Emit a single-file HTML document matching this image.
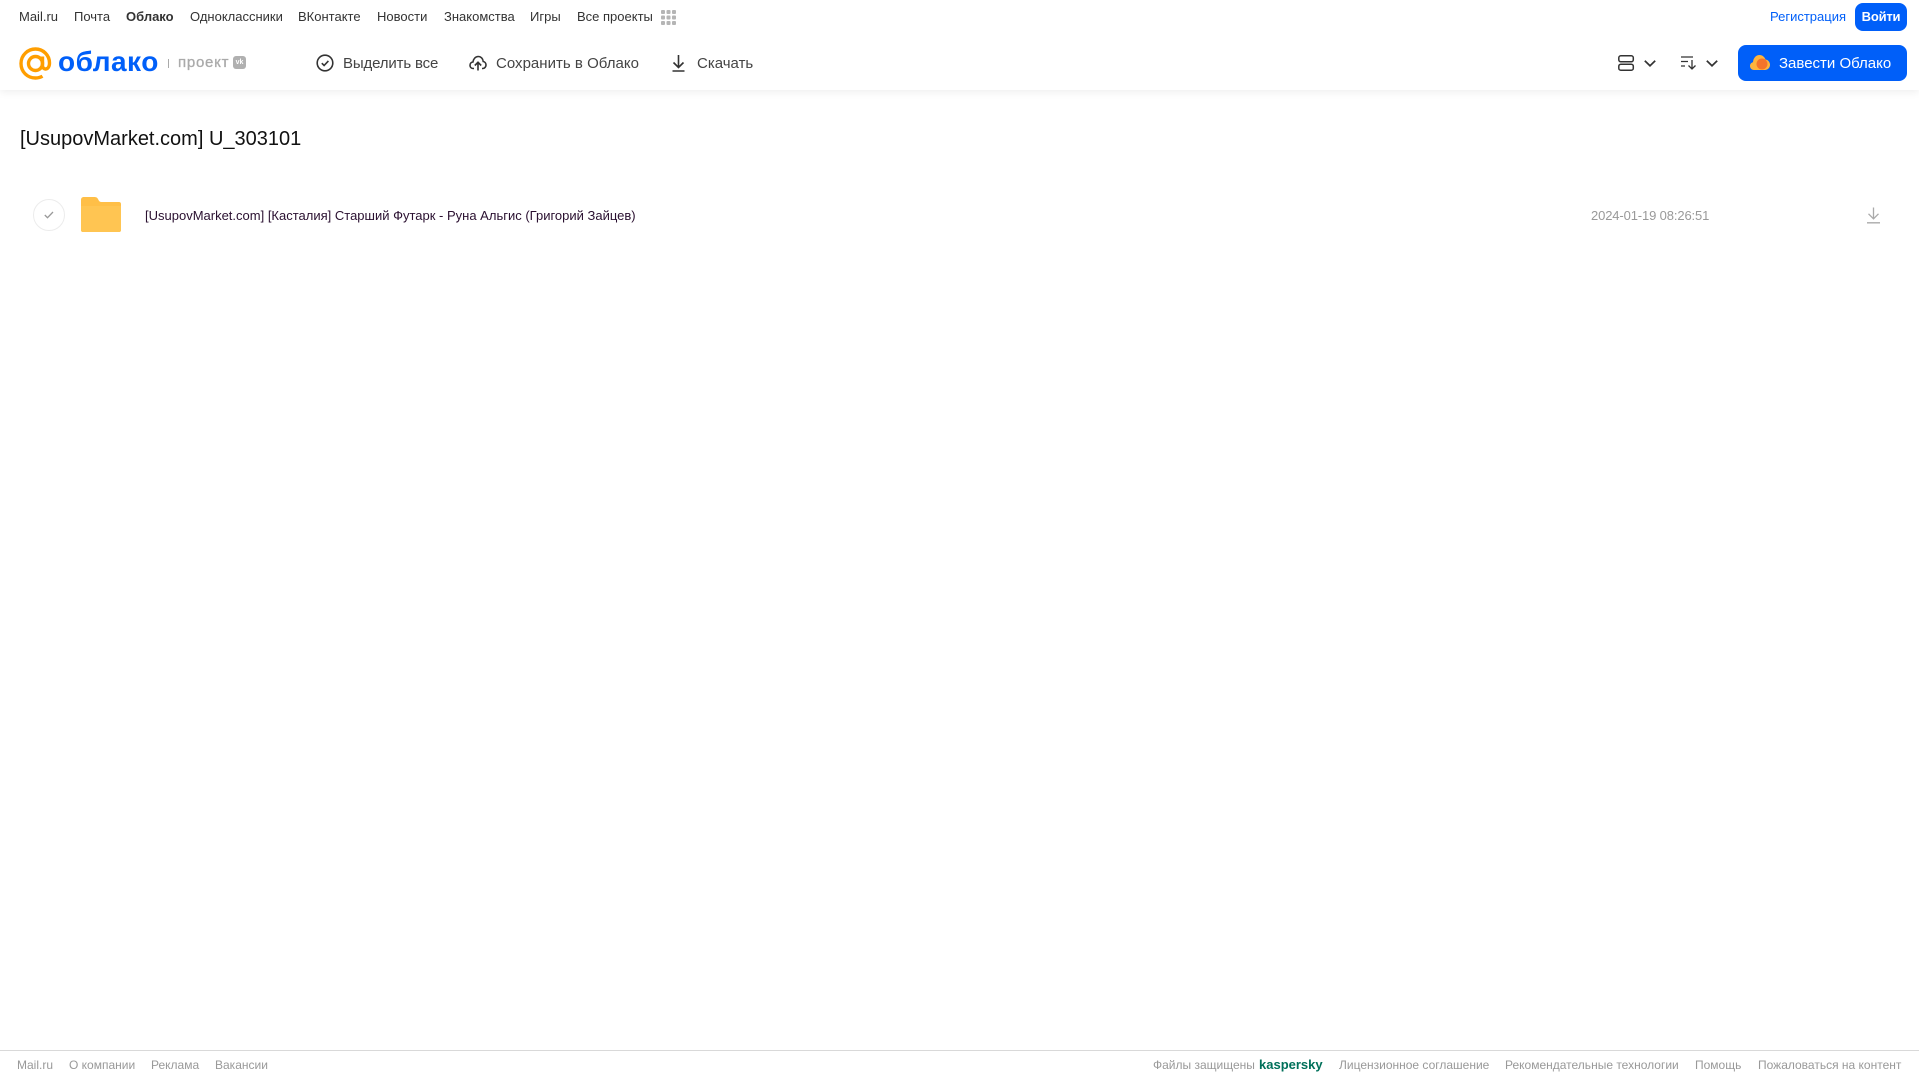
<!DOCTYPE html>
<html lang="ru"><head><meta charset="utf-8"><title>Облако</title>
<style>
html,body{margin:0;padding:0;width:1919px;height:1079px;overflow:hidden;background:#fff;font-family:"Liberation Sans",sans-serif}
.t{position:absolute;white-space:nowrap;line-height:20px}
.n{top:7px;font-size:13px;color:#333}
.b{top:54px;font-size:15px;color:#444;letter-spacing:0}
.f{top:1055px;font-size:12px;color:#999}
svg{position:absolute;overflow:visible}
</style></head><body>
<div style="position:absolute;left:0;top:0;width:1919px;height:90px;background:#fff;box-shadow:0 2px 8px rgba(0,0,0,.07)"></div>

<span class="t n" style="left:19px">Mail.ru</span>
<span class="t n" style="left:74px">Почта</span>
<span class="t n" style="left:126px;font-weight:bold">Облако</span>
<span class="t n" style="left:190px">Одноклассники</span>
<span class="t n" style="left:298px">ВКонтакте</span>
<span class="t n" style="left:377px">Новости</span>
<span class="t n" style="left:444px">Знакомства</span>
<span class="t n" style="left:530px">Игры</span>
<span class="t n" style="left:577px">Все проекты</span>
<svg style="left:661px;top:10px" width="15" height="15" fill="#b5b5b5"><rect width="4" height="4" rx="1"/><rect x="5.500" width="4" height="4" rx="1"/><rect x="11" width="4" height="4" rx="1"/><rect y="5.500" width="4" height="4" rx="1"/><rect x="5.500" y="5.500" width="4" height="4" rx="1"/><rect x="11" y="5.500" width="4" height="4" rx="1"/><rect y="11" width="4" height="4" rx="1"/><rect x="5.500" y="11" width="4" height="4" rx="1"/><rect x="11" y="11" width="4" height="4" rx="1"/></svg>

<span class="t n" style="left:1770px;color:#005ff9">Регистрация</span>
<div style="position:absolute;left:1855px;top:3px;width:52px;height:28px;border-radius:8px;background:#005ff9;color:#fff;font-size:13px;font-weight:bold;line-height:28px;text-align:center;letter-spacing:-.2px">Войти</div>

<svg style="left:19px;top:47px" width="33" height="33" viewBox="0 0 33 33" fill="none" stroke="#ff9e00" stroke-width="3.400"><circle cx="16.500" cy="16.500" r="7"/><path d="M23.500 9.500v9c0 5 7 5 7-2.500C30.500 8 24 2 16.500 2S2 8 2 16.500 8.500 31 16.500 31c3 0 5-.6 7-1.800"/></svg>
<span class="t" style="left:58px;top:47px;font-size:28px;line-height:30px;color:#005ff9;font-weight:bold;letter-spacing:.5px">облако</span>
<div style="position:absolute;left:168px;top:59px;width:1px;height:9px;background:#aaa"></div>
<span class="t" style="left:178px;top:53px;font-size:15px;color:#aaa;letter-spacing:.75px;-webkit-text-stroke:.3px #aaa">проект</span>
<div style="position:absolute;left:233px;top:56px;width:13px;height:13px;border-radius:3px;background:#b0b0b0;color:#fff;font-size:7px;font-weight:bold;line-height:13px;text-align:center">vk</div>

<svg style="left:316px;top:54px" width="18" height="18" viewBox="0 0 18 18" fill="none" stroke="#333" stroke-width="1.600"><circle cx="9" cy="9" r="7.800"/><path d="M5.800 9.200l2.300 2.300 4.300-4.600"/></svg>
<span class="t b" style="left:343px;letter-spacing:-.15px">Выделить все</span>
<svg style="left:469px;top:54px" width="18" height="18" viewBox="0 0 18 18" fill="none" stroke="#333" stroke-width="1.600"><path d="M5 14.500H4.300C2.300 14.500 1 13 1 11.200c0-1.700 1.200-3 2.900-3.200C4.300 5 6.500 2.500 9.200 2.500c2.800 0 4.800 2.200 5 5 1.700.3 2.800 1.800 2.800 3.500 0 1.900-1.400 3.500-3.300 3.500H13"/><path d="M9 16.500V8.500M5.800 11.500L9 8.300l3.200 3.200"/></svg>
<span class="t b" style="left:496px;letter-spacing:.02px">Сохранить в Облако</span>
<svg style="left:671px;top:54px" width="15" height="18" viewBox="0 0 15 18" fill="none" stroke="#333" stroke-width="1.600"><path d="M7.500 1v12M2.500 8.500l5 5 5-5M1.500 17h12"/></svg>
<span class="t b" style="left:697px">Скачать</span>

<svg style="left:1618px;top:55px" width="16" height="16" viewBox="0 0 16 16" fill="none" stroke="#333" stroke-width="1.500"><rect x=".8" y=".8" width="14.500" height="6" rx="2"/><rect x=".8" y="9.200" width="14.500" height="6" rx="2"/></svg>
<svg style="left:1644px;top:60px" width="12" height="7" fill="none" stroke="#333" stroke-width="1.700"><path d="M.8 .8L6 5.800 11.200 .8"/></svg>
<svg style="left:1681px;top:56px" width="16" height="14" viewBox="0 0 16 14" fill="none" stroke="#333" stroke-width="1.300"><path d="M0 1h12M0 5.500h7M0 10h4M11 4v9M7.500 9.500l3.500 3.500 3.500-3.500"/></svg>
<svg style="left:1706px;top:60px" width="12" height="7" fill="none" stroke="#333" stroke-width="1.700"><path d="M.8 .8L6 5.800 11.200 .8"/></svg>

<div style="position:absolute;left:1738px;top:45px;width:169px;height:36px;border-radius:8px;background:#005ff9"></div>
<svg style="left:1750px;top:54px" width="20" height="17" viewBox="0 0 20 17"><path d="M4 16C1.500 16 0 14 0 12c0-2 1.300-3.500 3-3.800C3.300 4 6 1 9.500 1c3 0 5 2 6 4.500 2.500.3 4.500 2.500 4.500 5.300 0 3-2.300 5.200-5 5.200z" fill="#ffb43c"/><circle cx="12" cy="10" r="5.500" fill="#f4742b"/></svg>
<span class="t" style="left:1779px;top:54px;font-size:15px;color:#fff;letter-spacing:0">Завести Облако</span>

<span class="t" style="left:20px;top:128px;font-size:20px;line-height:22px;color:#111">[UsupovMarket.com] U_303101</span>

<div style="position:absolute;left:33px;top:199px;width:30px;height:30px;border:1px solid #ececec;border-radius:50%"></div>
<svg style="left:44px;top:211px" width="10" height="8" fill="none" stroke="#999" stroke-width="1.300"><path d="M.8 4l2.700 2.700L9 1"/></svg>
<svg style="left:81px;top:197px" width="40" height="35" viewBox="0 0 40 35"><path d="M3 0h10c3 0 3.500 1 4.500 3 .6 1.200 1.500 2 3 2H38c1.200 0 2 .8 2 2v26c0 1.200-.8 2-2 2H2c-1.200 0-2-.8-2-2V3C0 1 1 0 3 0z" fill="#ffbf47"/><path d="M0 9h40v24c0 1.200-.8 2-2 2H2c-1.200 0-2-.8-2-2z" fill="#ffc552"/></svg>
<span class="t" style="left:145px;top:206px;font-size:13px;color:#2a1030">[UsupovMarket.com] [Касталия] Старший Футарк - Руна Альгис (Григорий Зайцев)</span>
<span class="t" style="left:1591px;top:206px;font-size:13px;color:#999;letter-spacing:-.13px">2024-01-19 08:26:51</span>
<svg style="left:1867px;top:207px" width="13" height="17" viewBox="0 0 13 17" fill="none" stroke="#aaa" stroke-width="1.300"><path d="M6.500 .5v11M1.500 6.800l5 5 5-5M0 15.800h13"/></svg>

<div style="position:absolute;left:0;top:1050px;width:1919px;height:1px;background:#d9d9d9"></div>
<span class="t f" style="left:17px">Mail.ru</span>
<span class="t f" style="left:69px">О компании</span>
<span class="t f" style="left:151px">Реклама</span>
<span class="t f" style="left:215px">Вакансии</span>
<span class="t f" style="left:1153px">Файлы защищены</span>
<span class="t f" style="left:1259px;color:#00705a;font-weight:bold;font-size:13px">kaspersky</span>
<span class="t f" style="left:1339px">Лицензионное соглашение</span>
<span class="t f" style="left:1505px">Рекомендательные технологии</span>
<span class="t f" style="left:1695px">Помощь</span>
<span class="t f" style="left:1758px">Пожаловаться на контент</span>
</body></html>
